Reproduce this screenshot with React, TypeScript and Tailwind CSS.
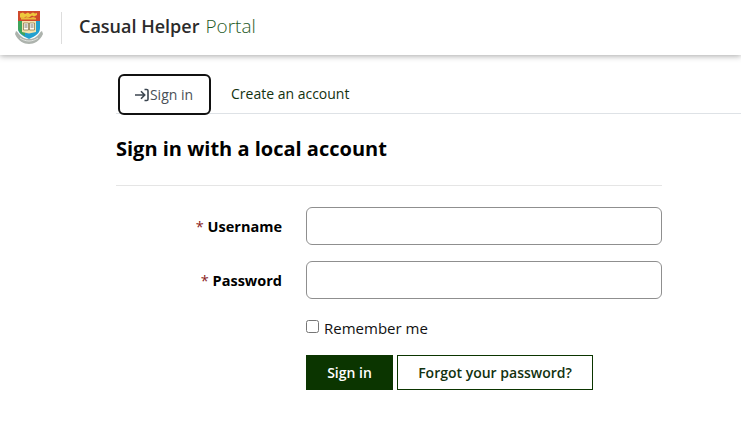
import React from "react";

function Crest() {
  return (
    <svg width="28" height="34" viewBox="0 0 28 34" className="block">
      <path d="M3 1h22v17c0 5-4 8-11 11C7 26 3 23 3 18z" fill="#23a0cf" />
      <path d="M3 10h7v16c-4-2-7-4-7-8z" fill="#3fa45c" />
      <path d="M3 1h22v10H3z" fill="#cf4a2c" />
      <path d="M5 3.500l3-1 2 1.500 3-1.500 2 1.500 3-1.500 2 1 2-.5v2l-3 1.500-2-1-3 2-3-1-2 1.500-4-.5z" fill="#eec83c" />
      <path d="M6 7l3 1 3-1 3 1 3-1 3 1v1.500H6z" fill="#e9b93a" />
      <path d="M7 11h14v11l-7 1.500L7 22z" fill="#f3e3ad" />
      <path d="M8.500 13h5v7h-5zM14.500 13h5v7h-5z" fill="#fdfbf0" stroke="#6d5a2e" strokeWidth="0.6" />
      <path d="M9.500 15h3M9.500 17h3M15.500 15h3M15.500 17h3" stroke="#555" strokeWidth="0.8" />
      <path d="M1 21c2 1 2 2 3 3 2 3 6 5 10 5s8-2 10-5c1-1 1-2 3-3l1 3c-3 7-9 10-14 10S3 31 0 24z" fill="#adb3ad" />
      <path d="M5 28c3 2 6 3 9 3s6-1 9-3" stroke="#eef0ee" strokeWidth="0.8" fill="none" />
    </svg>
  );
}

function SignInIcon() {
  return (
    <svg width="16" height="16" viewBox="0 0 16 16" fill="none" stroke="#3c4650" strokeWidth="1.600" className="block shrink-0">
      <path d="M1 8h9.500M7 4.300 10.700 8 7 11.700" />
      <path d="M10.500 2.500h2.200c.8 0 1.300.5 1.300 1.300v8.400c0 .8-.5 1.300-1.300 1.300h-2.200" />
    </svg>
  );
}

export default function App() {
  return (
    <div className="min-h-[434px] bg-white text-[#111] font-['Open_Sans','Noto_Sans',sans-serif] overflow-hidden">
      <header className="h-[55px] flex items-center bg-white shadow-[0_1px_6px_rgba(0,0,0,0.35)]">
        <div className="ml-[15px] w-[28px] h-[34px] -mt-[2px]">
          <Crest />
        </div>
        <div className="ml-[18px] w-px h-[32px] bg-[#dddddd]" />
        <div className="ml-[17px] text-[18px] leading-[24px] -mt-[3px] whitespace-nowrap">
          <span className="font-semibold text-[#2b2b2b]">Casual Helper</span>
          <span className="ml-[6px] text-[19px] font-light text-[#1f5a1f]">Portal</span>
        </div>
      </header>

      <main className="pl-[116px]">
        <nav className="mt-[19px] flex items-stretch h-[40px] border-b border-[#dee2e6]">
          <a className="ml-[2px] w-[93px] h-[41px] flex items-center justify-center rounded-[6px] border-2 border-[#111] text-[14px] text-[#495057] bg-white pr-[2px]">
            <SignInIcon />
            <span>Sign in</span>
          </a>
          <a className="ml-[20px] flex items-center text-[14px] text-[#12320f]">Create an account</a>
        </nav>

        <h2 className="mt-[20px] text-[20px] leading-[30px] font-bold text-black">Sign in with a local account</h2>

        <div className="w-[546px]">
          <hr className="mt-[21px] border-t border-[#e5e5e5]" />

          <div className="mt-[21px] flex items-center">
            <label className="w-[166px] pt-[2px] text-right text-[14.5px] font-bold text-black">
              <span className="text-[#8a1c1c] font-normal">*</span> Username
            </label>
            <input className="ml-[24px] w-[356px] h-[38px] rounded-[6px] border border-[#8f8f8f] bg-white" />
          </div>

          <div className="mt-[16px] flex items-center">
            <label className="w-[166px] pt-[2px] text-right text-[14.5px] font-bold text-black">
              <span className="text-[#8a1c1c] font-normal">*</span> Password
            </label>
            <input className="ml-[24px] w-[356px] h-[38px] rounded-[6px] border border-[#8f8f8f] bg-white" />
          </div>

          <label className="mt-[18px] ml-[190px] flex items-center text-[15px] leading-[22px] text-[#111]">
            <input type="checkbox" className="w-[13px] h-[13px] mr-[5px] -mt-[3px]" />
            Remember me
          </label>

          <div className="mt-[16px] ml-[190px] flex gap-[4px]">
            <button className="w-[87px] h-[35px] bg-[#0b3500] text-white text-[14px] font-semibold">Sign in</button>
            <button className="w-[196px] h-[35px] bg-white border border-[#0b3500] text-[#12320f] text-[14px] font-semibold">
              Forgot your password?
            </button>
          </div>
        </div>
      </main>
    </div>
  );
}
